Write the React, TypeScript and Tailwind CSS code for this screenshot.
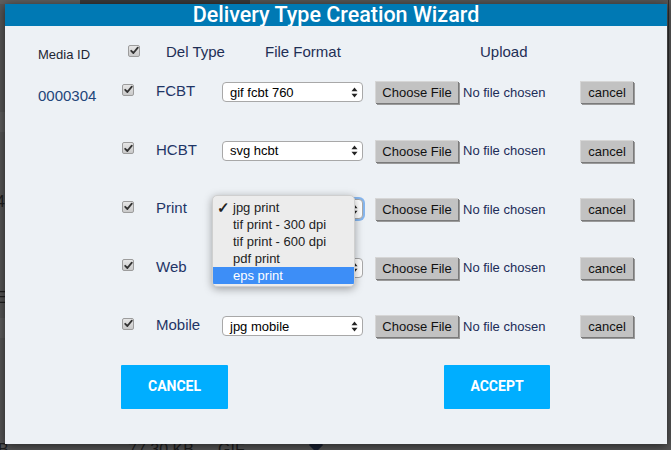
const ROWS: { type: string; format: string; open?: boolean }[] = [
  { type: "FCBT", format: "gif fcbt 760" },
  { type: "HCBT", format: "svg hcbt" },
  { type: "Print", format: "jpg print", open: true },
  { type: "Web", format: "jpg web" },
  { type: "Mobile", format: "jpg mobile" },
];

const PRINT_OPTIONS = [
  "jpg print",
  "tif print - 300 dpi",
  "tif print - 600 dpi",
  "pdf print",
  "eps print",
];

function Checkbox() {
  return (
    <span className="inline-flex w-[12px] h-[12px] rounded-[2px] border border-[#9c9c9c] bg-linear-to-b from-[#e6e6e6] to-[#c9c9c9] items-center justify-center">
      <svg width="9" height="9" viewBox="0 0 9 9" aria-hidden="true">
        <path d="M1.2 4.8 L3.4 7 L7.8 1.6" fill="none" stroke="#333" strokeWidth="1.8" strokeLinecap="round" strokeLinejoin="round" />
      </svg>
    </span>
  );
}

function Arrows() {
  return (
    <svg width="7" height="11" viewBox="0 0 7 11" aria-hidden="true">
      <path d="M3.5 0.5 L6.5 4.3 L0.5 4.3 Z" fill="#222" />
      <path d="M3.5 10.5 L6.5 6.7 L0.5 6.7 Z" fill="#222" />
    </svg>
  );
}

function SelectBox({ value, focused }: { value: string; focused?: boolean }) {
  return (
    <div
      className={`w-[141px] h-[20px] rounded-[4px] border border-[#a8a8a8] bg-white flex items-center pl-[7px] pr-[4px] text-[13px] text-black ${
        focused ? "shadow-[0_0_0_2px_#86b6ee]" : ""
      }`}
    >
      <span className="flex-1 leading-none">{focused ? "" : value}</span>
      <Arrows />
    </div>
  );
}

function GreyButton({ label, w }: { label: string; w: string }) {
  return (
    <button
      className={`${w} h-[22px] bg-[#c2c2c2] border-t border-l border-[#d6d6d6] shadow-[1px_1px_0_#7a7a7a,2px_2px_0_#9a9a9a] text-[13px] text-[#111] leading-none flex items-center justify-center`}
    >
      {label}
    </button>
  );
}

function PrintMenu() {
  return (
    <div className="absolute left-[-10px] top-[-4px] w-[143px] h-[92px] rounded-[5px] bg-[#ececec] shadow-[0_2px_8px_rgba(0,0,0,0.35)] border border-[#cfcfcf] pt-[3px] overflow-hidden z-10">
      {PRINT_OPTIONS.map((o, i) => (
        <div
          key={o}
          className={`h-[17px] flex items-center text-[13px] leading-none ${
            i === 4 ? "bg-[#3d8ef7] text-white" : "text-[#222]"
          }`}
        >
          <span className="w-[20px] pl-[4px] text-[15px] font-bold">{i === 0 ? "✓" : ""}</span>
          <span>{o}</span>
        </div>
      ))}
    </div>
  );
}

export default function App() {
  return (
    <div
      className="relative w-[671px] h-[450px] overflow-hidden bg-[#575757]"
      style={{ fontFamily: '"Liberation Sans", Arial, sans-serif' }}
    >
      {/* page behind the overlay */}
      <div className="absolute left-0 top-0 w-[80px] h-[4px] bg-[#5f5f5f]" />
      <div className="absolute left-[80px] top-0 w-[170px] h-[4px] bg-[#3a3a3a]" />
      <div className="absolute left-0 top-[112px] w-[5px] h-[20px] bg-[#5f5f5f]" />
      <div className="absolute left-0 top-[318px] w-[5px] h-[20px] bg-[#5f5f5f]" />
      <span className="absolute left-[-4px] top-[190px] text-[16px] text-[#1f1f1f]">4</span>
      <span className="absolute left-[-4px] top-[286px] text-[16px] text-[#1f1f1f]">E</span>
      <span className="absolute left-[-2px] top-[438px] text-[16px] text-[#1f1f1f]">B</span>
      <span className="absolute left-[128px] top-[438px] text-[16px] text-[#1f1f1f]">77.30 KB</span>
      <span className="absolute left-[218px] top-[438px] text-[16px] text-[#1f1f1f]">GIF</span>
      <span className="absolute left-[311px] top-[440px] w-[10px] h-[10px] bg-[#1a2233] rotate-45" />
      <div className="absolute left-[668px] top-0 w-[3px] h-[310px] border-l border-[#2f2f2f]" />

      {/* modal */}
      <div className="absolute left-[5px] top-[4px] w-[662px] h-[440px] bg-[#edf1f5] shadow-[0_2px_10px_rgba(0,0,0,0.6)]">
        <div className="h-[22px] bg-[#0079b4] flex items-center justify-center overflow-hidden">
          <h1
            className="text-white text-[21.5px] font-medium leading-none"
            style={{ fontFamily: "Roboto, sans-serif" }}
          >
            Delivery Type Creation Wizard
          </h1>
        </div>

        <div className="pl-[33px] pt-[16px]">
          {/* column headings */}
          <div className="flex items-center h-[21px] text-[15px] text-[#1f2f55]">
            <span className="w-[90px] text-[13px] text-[#1e2633] mt-[5px]">Media ID</span>
            <span className="w-[38px] flex mt-[-4px]">
              <Checkbox />
            </span>
            <span className="w-[99px]">Del Type</span>
            <span className="w-[215px]">File Format</span>
            <span>Upload</span>
          </div>

          {ROWS.map((r, i) => (
            <div key={r.type} className="flex items-center h-[58.5px]">
              <span className="w-[84px] text-[15px] text-[#23457a] mt-[8px]">
                {i === 0 ? "0000304" : ""}
              </span>
              <span className="w-[34px] flex mt-[-5px]">
                <Checkbox />
              </span>
              <span className="w-[66px] text-[15px] text-[#1f3566] mt-[-2px]">{r.type}</span>
              <div className="relative">
                <SelectBox value={r.format} focused={r.open} />
                {r.open && <PrintMenu />}
              </div>
              <span className="ml-[12px]">
                <GreyButton label="Choose File" w="w-[83px]" />
              </span>
              <span className="ml-[5px] w-[117px] text-[13px] text-[#1c2d58]">No file chosen</span>
              <GreyButton label="cancel" w="w-[53px]" />
            </div>
          ))}

          <div className="flex mt-[9px]" style={{ fontFamily: "Roboto, sans-serif" }}>
            <button className="ml-[83px] w-[107px] h-[44px] bg-[#00aeff] rounded-[1px] text-white text-[14px] font-bold">
              CANCEL
            </button>
            <button className="ml-[216px] w-[106px] h-[44px] bg-[#00aeff] rounded-[1px] text-white text-[14px] font-bold">
              ACCEPT
            </button>
          </div>
        </div>
      </div>
    </div>
  );
}
